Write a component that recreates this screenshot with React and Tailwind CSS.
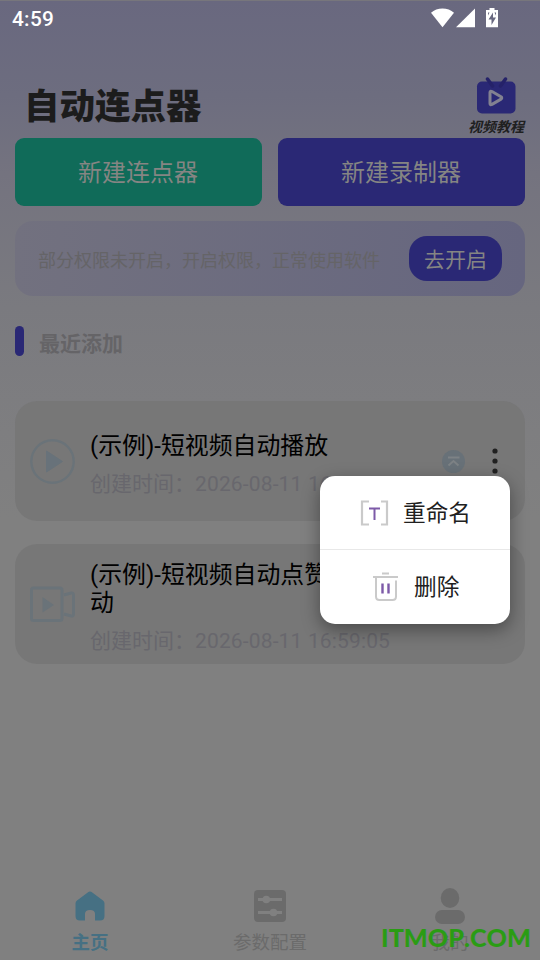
import React from "react";

function StatusBar() {
  return (
    <div className="flex h-9 shrink-0 items-center justify-between border-t border-[#77767c] pl-3 pr-[41px] text-white">
      <span className="pt-0.5 text-[20.800px] font-medium leading-none tracking-[0.3px]">4:59</span>
      <svg className="-mt-0.5" width="68" height="20" viewBox="0 0 68 20" fill="#fff">
        <path d="M0 4.800C6-.9 17-.9 23 4.800L11.500 19.300Z" />
        <path d="M25 19.300 44 .6v18.700Z" />
        <path d="M58.500 0h5v2H67v17.300H55V2h3.500Z" />
        <path d="M62 4.500 57.500 11.500h3v5.500l4.500-7.500h-3Z" fill="#696980" />
        <path d="M57 4.500h1.500l-1.500 3ZM63.500 4.500H65v3Z" fill="#696980" />
      </svg>
    </div>
  );
}

function Tutorial() {
  return (
    <div className="flex w-[60px] flex-col items-center">
      <svg width="40" height="37" viewBox="0 0 40 37" fill="none">
        <rect x="1" y="4.500" width="38.500" height="32" rx="5" fill="#2a2875" />
        <path d="m11.500 2 5 7M29.500 2l-5 7" stroke="#252269" strokeWidth="3.500" strokeLinecap="round" />
        <path d="M14 15.500q0-2 2-1l9 5.200q1.500 1.200 0 2.400l-9 5.300q-2 1-2-1Z" stroke="#828191" strokeWidth="3" strokeLinejoin="round" />
      </svg>
      <span className="mt-[3px] whitespace-nowrap text-[14px] font-bold italic leading-5 text-[#202020]">视频教程</span>
    </div>
  );
}

function TaskCard({ icon, title, time, actions }) {
  return (
    <div className="flex h-[120px] rounded-[22px] bg-[#777777] pl-[15px]">
      <div className="flex w-[60px] items-center">{icon}</div>
      <div className="flex w-[310px] flex-col justify-center pt-2">
        <div className="text-[23.900px] leading-7 text-black">{title}</div>
        <div className="mt-[9px] whitespace-nowrap text-[21px] leading-[30px] text-[#68676d]">
          创建时间：<span className="tracking-[0.150px]">{time}</span>
        </div>
      </div>
      {actions}
    </div>
  );
}

function NavItem({ icon, label, className }) {
  return (
    <div className={`flex w-[180px] flex-col items-center ${className || ""}`}>
      <div className="flex h-[41px] items-end">{icon}</div>
      <span className="mt-[7px] text-[18.500px] leading-6">{label}</span>
    </div>
  );
}

const playIcon = (
  <svg width="45" height="45" viewBox="0 0 45 45">
    <circle cx="22.500" cy="22.500" r="21.200" fill="none" stroke="#6a7379" strokeWidth="2.400" />
    <path d="M16.500 12v21l16-10.500Z" fill="#68727a" stroke="#68727a" strokeLinejoin="round" />
  </svg>
);

const videoIcon = (
  <svg width="46" height="37" viewBox="0 0 46 37" fill="none" stroke="#6a7379" strokeWidth="3">
    <rect x="1.500" y="2" width="30.500" height="32.500" rx="2" />
    <path d="m34 9 7-2q2.500-.5 2.500 2v19q0 2.500-2.500 2L34 28" />
    <path d="M12.500 11v15.500L24 19Z" fill="#6a7379" stroke="none" />
  </svg>
);

const homeIcon = (
  <svg className="mb-[3px]" width="30" height="30" viewBox="0 0 30 30" fill="#467083">
    <path d="M12.700 1.400q2.300-1.700 4.600 0L28 9.500q1.500 1.200 1.500 3V25q0 4.500-4.500 4.500h-5V23q0-4-5-4t-5 4v6.500H5Q.500 29.500.500 25V12.500q0-1.800 1.500-3Z" />
  </svg>
);

const configIcon = (
  <svg className="mb-0.5" width="32" height="32" viewBox="0 0 32 32">
    <rect width="32" height="32" rx="4" fill="#6b6b6b" />
    <path d="M4 9.500h24M4 22.500h24" stroke="#808080" strokeWidth="3" />
    <circle cx="12.300" cy="9.500" r="3.800" fill="#808080" />
    <circle cx="19.500" cy="22.500" r="3.800" fill="#808080" />
  </svg>
);

const userIcon = (
  <svg width="30" height="36" viewBox="0 0 30 36" fill="#6b6b6b">
    <ellipse cx="15" cy="10" rx="9.300" ry="10" />
    <rect y="22" width="30" height="14" rx="7" />
  </svg>
);

function PopupMenu() {
  return (
    <div className="absolute left-[320px] top-[476px] flex h-[148px] w-[190px] flex-col rounded-[15px] bg-white text-[22.700px] text-[#202020] shadow-[0_6px_18px_rgba(0,0,0,0.38)]">
      <div className="flex h-[74px] items-center gap-[14px] border-b border-[#e8e8e8] pl-10">
        <svg width="29" height="26" viewBox="0 0 29 26" fill="none" strokeWidth="2.200">
          <path d="M9 1.500H2v23h7M21 1.500h6v23h-6" stroke="#cacaca" />
          <path d="M9 8.500h11M14.500 8.500V20" stroke="#7d5aa8" strokeWidth="2" />
        </svg>
        <span className="pt-0.5 leading-8">重命名</span>
      </div>
      <div className="flex flex-1 items-center gap-[15px] pl-[53px]">
        <svg width="26" height="30" viewBox="0 0 26 30" fill="none" stroke="#cacaca" strokeWidth="2">
          <path d="M9 1.500h7M0 5h25M3 5.500v19q0 3.500 3.500 3.500h13q3.500 0 3.500-3.500V8.500" />
          <path d="M9.500 11.500v10M15.500 11.500v10" stroke="#7d5aa8" strokeWidth="2.400" />
        </svg>
        <span className="pt-0.5 leading-8">删除</span>
      </div>
    </div>
  );
}

export default function App() {
  return (
    <div className="relative flex h-[960px] w-[540px] flex-col overflow-hidden bg-[linear-gradient(180deg,#69687f_0%,#6d6d7f_10%,#74737f_18%,#7a7a7f_32%,#7e7e80_45%,#808080_54%)] font-[Roboto,'Noto_Sans_CJK_SC',sans-serif]">
      <StatusBar />
      <header className="flex h-[102px] shrink-0 items-start justify-between pl-[24px] pr-[14px] pt-[41px]">
        <h1 className="mt-[4px] text-[35.500px] font-black leading-[52px] text-[#1c1c1c]">自动连点器</h1>
        <Tutorial />
      </header>
      <div className="flex shrink-0 gap-4 px-[15px] text-[24px] text-[#858583]">
        <div className="flex h-[68px] flex-1 items-center justify-center rounded-[9px] bg-[#106b59] pr-px pt-[2px]">新建连点器</div>
        <div className="flex h-[68px] flex-1 items-center justify-center rounded-[9px] bg-[#2a2875] pr-px pt-[2px]">新建录制器</div>
      </div>
      <div className="mx-[15px] mt-[15px] flex h-[75px] shrink-0 items-center justify-between rounded-[18px] bg-gradient-to-r from-[#72717f] to-[#66667f] pl-[23px] pr-[23px]">
        <span className="pt-[3px] text-[18px] text-[#656467]">部分权限未开启，开启权限，正常使用软件</span>
        <div className="flex h-[45px] w-[93px] items-center justify-center rounded-[18px] bg-[#2a2875] pt-[4px] text-[21px] text-[#858583]">去开启</div>
      </div>
      <div className="mt-[30px] flex h-[30px] shrink-0 items-center gap-[15px] pl-[15px]">
        <div className="h-[30px] w-[9px] rounded-full bg-[#2a2875]" />
        <h2 className="mt-1.5 text-[21px] font-bold leading-[30px] text-[#656467]">最近添加</h2>
      </div>
      <main className="mt-[45px] flex flex-col gap-[23px] px-[15px]">
        <TaskCard
          icon={playIcon}
          title="(示例)-短视频自动播放"
          time="2026-08-11 16:59:05"
          actions={
            <div className="flex items-center gap-[27px] pl-[42px]">
              <svg width="23" height="23" viewBox="0 0 23 23">
                <circle cx="11.500" cy="11.500" r="11.500" fill="#687178" />
                <path d="M6 7.500h11.500M6.500 15.500l5-4.500 5 4.500" fill="none" stroke="#7d8285" strokeWidth="2" />
              </svg>
              <svg width="6" height="27" viewBox="0 0 6 27" fill="#202020">
                <circle cx="3" cy="3" r="2.600" />
                <circle cx="3" cy="13" r="2.600" />
                <circle cx="3" cy="23" r="2.600" />
              </svg>
            </div>
          }
        />
        <TaskCard
          icon={videoIcon}
          title={<>(示例)-短视频自动点赞滑<br />动</>}
          time="2026-08-11 16:59:05"
        />
      </main>
      <nav className="mt-auto flex h-[77px] shrink-0 text-[#6b6b6b]">
        <NavItem icon={homeIcon} label="主页" className="font-bold text-[#467083]" />
        <NavItem icon={configIcon} label="参数配置" />
        <NavItem icon={userIcon} label="我的" />
      </nav>
      <PopupMenu />
      <div className="absolute left-[381px] top-[919px] whitespace-nowrap font-[Lato,sans-serif] text-[25.200px] font-black leading-9 text-[#2a9c14] [font-kerning:none]">ITMOP.COM</div>
    </div>
  );
}
